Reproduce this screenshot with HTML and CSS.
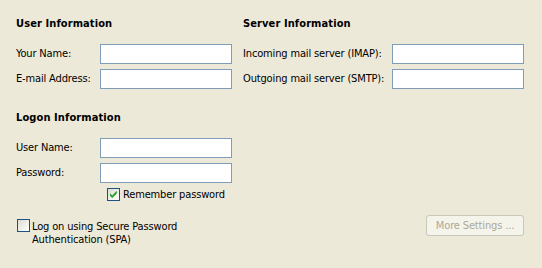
FILE: index.html
```html
<!DOCTYPE html>
<html>
<head>
<meta charset="utf-8">
<link rel="stylesheet" href="styles.css">
</head>
<body>
<div class="page">
  <div class="top">
    <div class="col col-left">
      <div class="heading">User Information</div>
      <div class="row"><span class="label label-left">Your Name:</span><span class="input"></span></div>
      <div class="row"><span class="label label-left">E-mail Address:</span><span class="input"></span></div>
      <div class="heading heading-logon">Logon Information</div>
      <div class="row"><span class="label label-left">User Name:</span><span class="input"></span></div>
      <div class="row"><span class="label label-left">Password:</span><span class="input"></span></div>
      <div class="check-row remember">
        <span class="checkbox">
          <svg width="11" height="11" viewBox="0 0 11 11"><path d="M2 4.3 L4.2 6.4 L8.8 1.8 L8.8 4.4 L4.2 9 L2 6.8 Z" fill="#21a121"/></svg>
        </span>
        <span class="check-text">Remember password</span>
      </div>
    </div>
    <div class="col col-right">
      <div class="heading">Server Information</div>
      <div class="row"><span class="label label-right">Incoming mail server (IMAP):</span><span class="input"></span></div>
      <div class="row"><span class="label label-right">Outgoing mail server (SMTP):</span><span class="input"></span></div>
    </div>
  </div>
  <div class="bottom">
    <div class="check-row spa">
      <span class="checkbox"></span>
      <span class="check-text">Log on using Secure Password<br>Authentication (SPA)</span>
    </div>
    <div class="button">More Settings ...</div>
  </div>
</div>
</body>
</html>
```
FILE: styles.css
```css
html, body {
  margin: 0;
  padding: 0;
  background: #ece9d8;
}
body {
  font-family: "DejaVu Sans Condensed", "DejaVu Sans", sans-serif;
  font-size: 11px;
  line-height: 13px;
  letter-spacing: -0.15px;
  color: #000;
}
.page {
  padding: 17px 18px 0 16px;
  width: 508px;
  height: 251px;
}
.top {
  display: flex;
}
.col-left {
  width: 227px;
}
.col-right {
  flex: 1;
}
.heading {
  font-weight: bold;
  letter-spacing: 0.1px;
  height: 13px;
  margin-bottom: 14px;
}
.heading-logon {
  margin-top: 22px;
}
.row {
  display: flex;
  align-items: center;
  height: 20px;
  margin-bottom: 5px;
}
.label {
  position: relative;
  top: -1px;
}
.label-left {
  width: 84px;
}
.label-right {
  width: 149px;
}
.input {
  width: 132px;
  height: 20px;
  box-sizing: border-box;
  border: 1px solid #7f9db9;
  background: #fff;
}
.check-row {
  display: flex;
  align-items: flex-start;
}
.remember {
  margin-top: 1px;
  margin-left: 91px;
}
.checkbox {
  width: 13px;
  height: 13px;
  box-sizing: border-box;
  border: 1px solid #1c5180;
  background: linear-gradient(135deg, #dcdcd7 0%, #f4f4f0 70%, #ffffff 100%);
  display: flex;
  align-items: center;
  justify-content: center;
  flex: none;
}
.remember .check-text {
  margin-left: 3px;
}
.bottom {
  display: flex;
  justify-content: space-between;
  align-items: flex-start;
  margin-top: 14px;
}
.spa {
  margin-top: 4px;
  margin-left: 1px;
}
.spa .check-text {
  margin-left: 2px;
  margin-top: 1px;
}
.button {
  width: 98px;
  height: 21px;
  box-sizing: border-box;
  border: 1px solid #c9c7ba;
  border-radius: 3px;
  background: #f5f4ea;
  color: #aca899;
  display: flex;
  align-items: center;
  justify-content: center;
}
```
